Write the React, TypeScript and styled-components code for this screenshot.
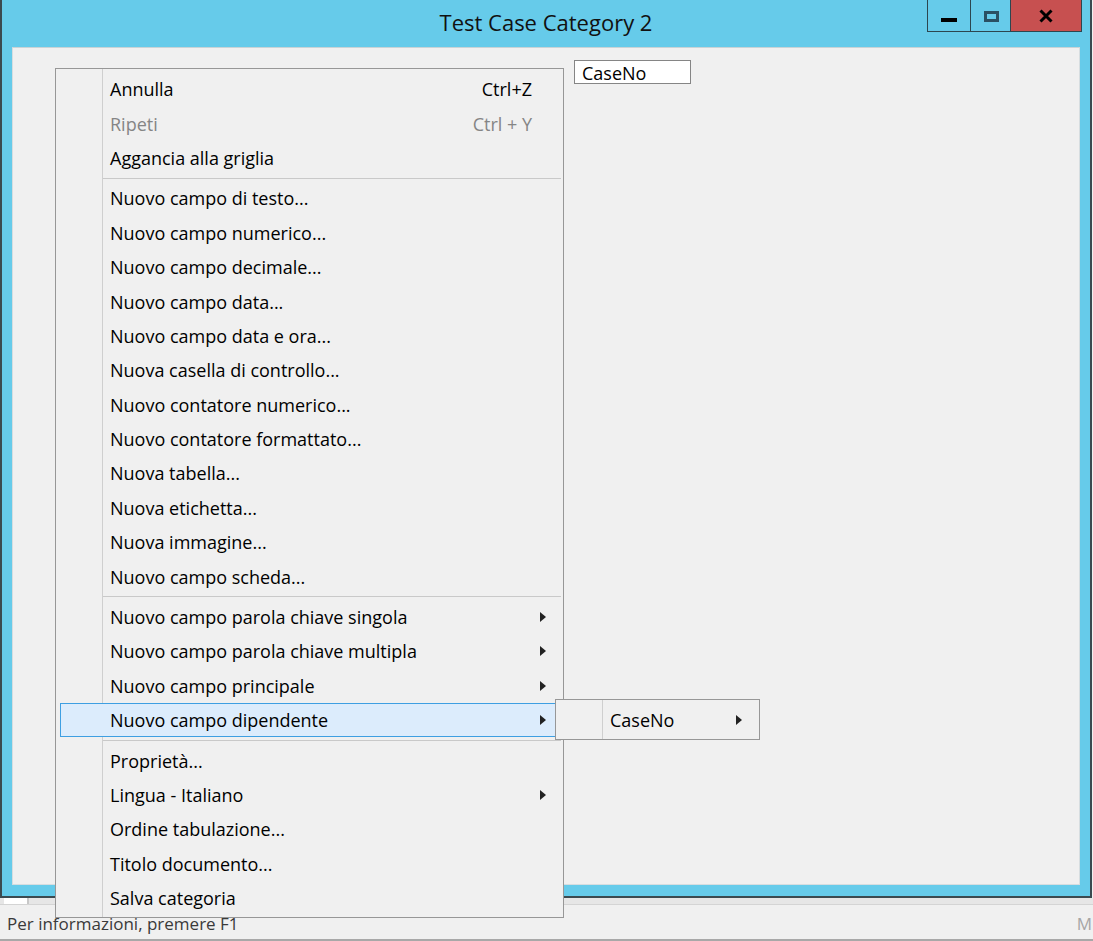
import React from 'react';
import styled, { createGlobalStyle, css } from 'styled-components';

const GlobalStyle = createGlobalStyle`
  html, body {
    margin: 0;
    padding: 0;
    background: #f0f0f0;
    font-family: 'Open Sans', 'Noto Sans', sans-serif;
  }
  * { box-sizing: border-box; }
`;

type MenuEntry =
  | { kind: 'sep' }
  | {
      kind?: 'item';
      label: string;
      shortcut?: string;
      disabled?: boolean;
      sub?: boolean;
      active?: boolean;
    };

const menuItems: MenuEntry[] = [
  { label: 'Annulla', shortcut: 'Ctrl+Z' },
  { label: 'Ripeti', shortcut: 'Ctrl + Y', disabled: true },
  { label: 'Aggancia alla griglia' },
  { kind: 'sep' },
  { label: 'Nuovo campo di testo...' },
  { label: 'Nuovo campo numerico...' },
  { label: 'Nuovo campo decimale...' },
  { label: 'Nuovo campo data...' },
  { label: 'Nuovo campo data e ora...' },
  { label: 'Nuova casella di controllo...' },
  { label: 'Nuovo contatore numerico...' },
  { label: 'Nuovo contatore formattato...' },
  { label: 'Nuova tabella...' },
  { label: 'Nuova etichetta...' },
  { label: 'Nuova immagine...' },
  { label: 'Nuovo campo scheda...' },
  { kind: 'sep' },
  { label: 'Nuovo campo parola chiave singola', sub: true },
  { label: 'Nuovo campo parola chiave multipla', sub: true },
  { label: 'Nuovo campo principale', sub: true },
  { label: 'Nuovo campo dipendente', sub: true, active: true },
  { kind: 'sep' },
  { label: 'Proprietà...' },
  { label: 'Lingua - Italiano', sub: true },
  { label: 'Ordine tabulazione...' },
  { label: 'Titolo documento...' },
  { label: 'Salva categoria' },
];

const App = () => {
  return (
    <>
      <GlobalStyle />
      <Screen>
        <Window>
          <TitleBar>
            <Title>Test Case Category 2</Title>
            <Controls>
              <CtrlButton $w={42}>
                <MinGlyph />
              </CtrlButton>
              <CtrlButton $w={40}>
                <MaxGlyph />
              </CtrlButton>
              <CtrlButton $w={71} $close>
                <svg width="14" height="14" viewBox="0 0 14 14">
                  <path d="M1.5 1.5 L12.5 12.5 M12.5 1.5 L1.5 12.5" stroke="#000" strokeWidth="3" />
                </svg>
              </CtrlButton>
            </Controls>
          </TitleBar>
          <Client>
            <Field>CaseNo</Field>
          </Client>
        </Window>
        <ScrollStrip>
          <StripThumb />
        </ScrollStrip>
        <StatusBar>
          <StatusText>Per informazioni, premere F1</StatusText>
          <StatusIndicator>M</StatusIndicator>
        </StatusBar>

        <Menu $left={55} $top={68} $width={509}>
          {menuItems.map((e, i) =>
            e.kind === 'sep' ? (
              <Separator key={i} />
            ) : (
              <Item key={i} $active={e.active} $disabled={e.disabled}>
                <Label>{e.label}</Label>
                {e.shortcut && <Shortcut>{e.shortcut}</Shortcut>}
                <ArrowCell>{e.sub && <Arrow />}</ArrowCell>
              </Item>
            ),
          )}
        </Menu>

        <Menu $left={555} $top={699} $width={205}>
          <Item>
            <Label>CaseNo</Label>
            <ArrowCell>
              <Arrow />
            </ArrowCell>
          </Item>
        </Menu>
      </Screen>
    </>
  );
};

const Screen = styled.div`
  position: relative;
  width: 1093px;
  height: 941px;
  overflow: hidden;
  background: #f0f0f0;
`;

const Window = styled.div`
  width: 1092px;
  height: 898px;
  background: #66cbea;
  border-left: 2px solid #3b4a50;
  border-right: 2px solid #3b4a50;
  border-bottom: 2px solid #3b4a50;
  display: flex;
  flex-direction: column;
`;

const TitleBar = styled.div`
  height: 47px;
  display: grid;
  grid-template-columns: 1fr auto 1fr;
  flex-shrink: 0;
`;

const Title = styled.div`
  grid-column: 2;
  align-self: center;
  margin-top: -3px;
  font-size: 22px;
  color: #111;
  white-space: nowrap;
`;

const Controls = styled.div`
  grid-column: 3;
  justify-self: end;
  align-self: start;
  margin-right: 8px;
  display: flex;
  border: 1px solid #2c4650;
  border-top: none;
`;

const CtrlButton = styled.div<{ $w: number; $close?: boolean }>`
  width: ${(p) => p.$w}px;
  height: 31px;
  display: flex;
  align-items: center;
  justify-content: center;
  background: ${(p) => (p.$close ? '#c75050' : '#66cbea')};
  & + & {
    border-left: 1px solid #2c4650;
  }
`;

const MinGlyph = styled.div`
  width: 16px;
  height: 4px;
  background: #000;
  margin-top: 9px;
`;

const MaxGlyph = styled.div`
  width: 15px;
  height: 11px;
  border: 3px solid #2a5063;
  margin-top: 1px;
  margin-left: 2px;
`;

const Client = styled.div`
  position: relative;
  flex: 1;
  margin: 0 10px 11px 10px;
  background: #f0f0f0;
  border-top: 1px solid #c9d3d6;
  border-left: 1px solid #d6dde0;
  border-right: 1px solid #d6dde0;
  border-bottom: 1px solid #d6dde0;
`;

const Field = styled.div`
  position: absolute;
  left: 561px;
  top: 12px;
  width: 117px;
  height: 24px;
  background: #fff;
  border: 1px solid #858585;
  padding-left: 7px;
  font-size: 18px;
  line-height: 25px;
  color: #000;
`;

const ScrollStrip = styled.div`
  height: 6px;
  display: flex;
  padding-left: 4px;
  background: #e6e6e6;
`;

const StripThumb = styled.div`
  width: 25px;
  background: #fff;
  border-right: 2px solid #c8c8c8;
`;

const StatusBar = styled.div`
  height: 37px;
  display: flex;
  align-items: center;
  justify-content: space-between;
  border-top: 1px solid #d4d4d4;
  border-bottom: 2px solid #a8a8a8;
  padding: 0 0 0 7px;
  font-size: 17px;
`;

const StatusText = styled.span`
  color: #3a3a3a;
  margin-top: 2px;
`;

const StatusIndicator = styled.span`
  color: #a6a6a6;
  margin-top: 2px;
  padding-right: 1px;
`;

const Menu = styled.div<{ $left: number; $top: number; $width: number }>`
  position: absolute;
  left: ${(p) => p.$left}px;
  top: ${(p) => p.$top}px;
  width: ${(p) => p.$width}px;
  padding: 3px 0 2px;
  border: 1px solid #979797;
  background: linear-gradient(
      to right,
      transparent 46px,
      #cfcfcf 46px,
      #cfcfcf 47px,
      transparent 47px
    ),
    #f0f0f0;
`;

const Separator = styled.div`
  height: 6px;
  margin-left: 47px;
  margin-right: 2px;
  display: flex;
  align-items: center;
  &::after {
    content: '';
    flex: 1;
    height: 1px;
    background: #c9c9c9;
  }
`;

const Item = styled.div<{ $active?: boolean; $disabled?: boolean }>`
  position: relative;
  isolation: isolate;
  height: 34.4px;
  display: flex;
  align-items: center;
  padding-left: 54px;
  font-size: 18px;
  color: ${(p) => (p.$disabled ? '#858585' : '#000')};
  white-space: nowrap;
  ${(p) =>
    p.$active &&
    css`
      &::before {
        content: '';
        position: absolute;
        top: 0;
        bottom: 0;
        left: 4px;
        right: 2px;
        background: #dcecfc;
        border: 1px solid #3e9fe2;
        z-index: -1;
      }
    `}
`;

const Label = styled.span`
  flex: 1;
`;

const Shortcut = styled.span``;

const ArrowCell = styled.span`
  width: 31px;
  display: flex;
  align-items: center;
  padding-left: 8px;
`;

const Arrow = styled.span`
  width: 0;
  height: 0;
  border-top: 5px solid transparent;
  border-bottom: 5px solid transparent;
  border-left: 6px solid #222;
`;

export default App;
